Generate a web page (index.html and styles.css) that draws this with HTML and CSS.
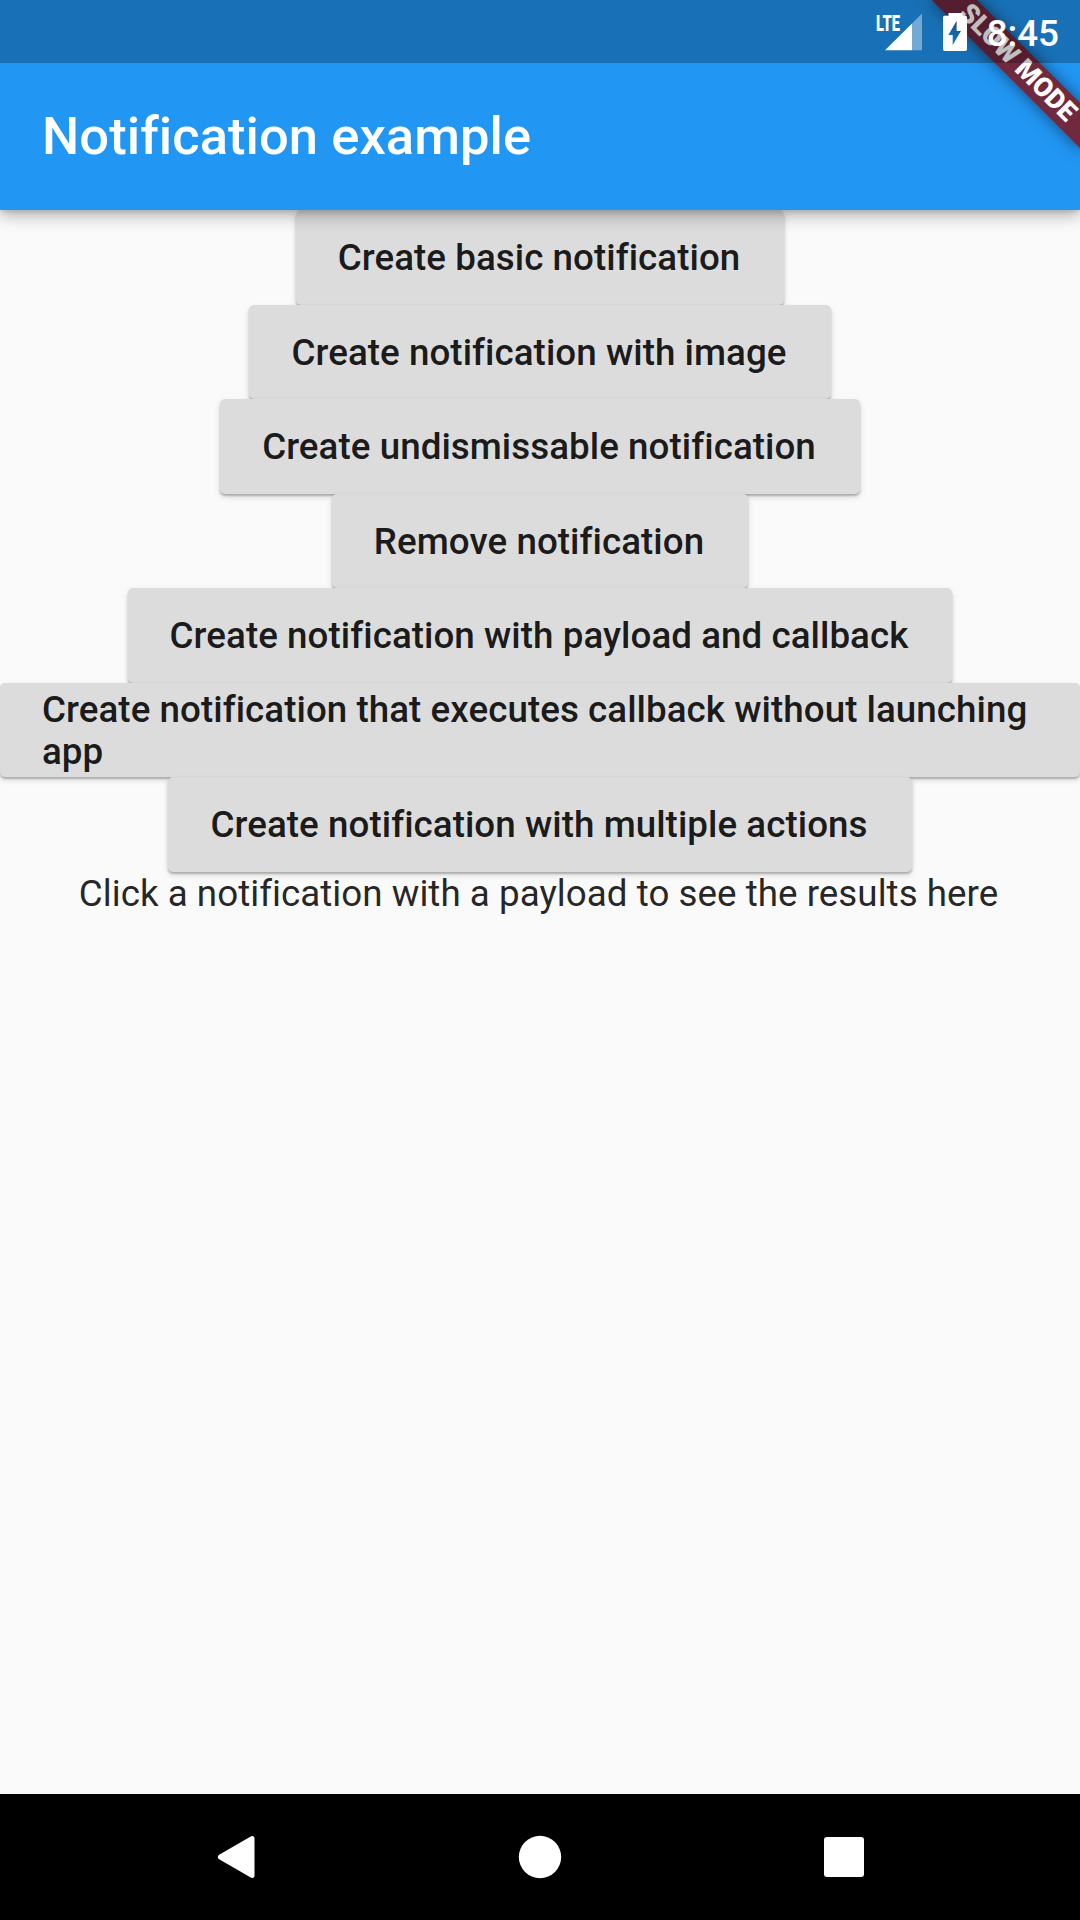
FILE: index.html
```html
<!DOCTYPE html>
<html lang="en">
<head>
<meta charset="utf-8">
<title>Notification example</title>
<link rel="stylesheet" href="styles.css">
</head>
<body>
<div class="screen">
  <header class="app-bar">
    <h1 class="title">Notification example</h1>
  </header>
  <main class="content">
    <button class="btn">Create basic notification</button>
    <button class="btn">Create notification with image</button>
    <button class="btn">Create undismissable notification</button>
    <button class="btn">Remove notification</button>
    <button class="btn">Create notification with payload and callback</button>
    <button class="btn">Create notification that executes callback without launching app</button>
    <button class="btn">Create notification with multiple actions</button>
    <p class="result">Click a notification with a payload to see the results here</p>
  </main>
  <nav class="nav-bar">
    <svg class="nav-icon back" viewBox="0 0 44 44"><path d="M6.4 22 L38 3.6 V40.4Z"/></svg>
    <svg class="nav-icon" viewBox="0 0 44 44"><circle cx="22" cy="22" r="21.2"/></svg>
    <svg class="nav-icon" viewBox="0 0 44 44"><rect x="2" y="2" width="40" height="40" rx="3"/></svg>
  </nav>
  <div class="banner">SLOW MODE</div>
  <div class="status-bar">
    <svg class="signal" viewBox="0 0 48 38">
      <path d="M11 37.3 L38 10.5 V37.3Z"/>
      <path class="faint" d="M38 10.5 L48 .6 V37.3 H38Z"/>
      <text class="lte" x="2" y="17.5" textLength="24" lengthAdjust="spacingAndGlyphs">LTE</text>
    </svg>
    <svg class="battery" viewBox="0 0 24 38">
      <path fill-rule="evenodd" d="M5.5 0 H19.5 V2.7 H22.5 Q24 2.7 24 4.5 V36.2 Q24 38 22.2 38 H1.8 Q0 38 0 36.2 V4.5 Q0 2.7 1.5 2.7 H5.5Z M13.6 8 L5.3 22 H9.7 V32 L17.9 18 H13.6Z"/>
    </svg>
    <span class="clock">8:45</span>
  </div>
</div>
</body>
</html>
```
FILE: styles.css
```css
* { box-sizing: border-box; }
body {
  margin: 0;
  font-family: Roboto, sans-serif;
  font-variant-ligatures: none;
}

.screen {
  position: relative;
  display: flex;
  flex-direction: column;
  width: 1080px;
  height: 1920px;
  overflow: hidden;
  background: #fafafa;
}

.app-bar {
  position: relative;
  z-index: 2;
  display: flex;
  align-items: center;
  height: 210px;
  padding: 63px 42px 0;
  background: #2196f3;
  box-shadow: 0 5px 16px rgba(0, 0, 0, .3), 0 2px 5px rgba(0, 0, 0, .12);
}
.title {
  margin: 0;
  color: #fff;
  font-size: 52.5px;
  font-weight: 500;
  line-height: 61px;
  letter-spacing: .06px;
}

.content {
  position: relative;
  z-index: 1;
  flex: 1;
  display: flex;
  flex-direction: column;
  align-items: center;
}
.btn {
  position: relative;
  height: 94.5px;
  max-width: 100%;
  padding: 2px 44px 0 42px;
  border: 0;
  border-radius: 5px;
  background: #dcdcdc;
  box-shadow: 0 2px 2px rgba(0, 0, 0, .22), 0 3px 6px rgba(0, 0, 0, .14);
  color: rgba(0, 0, 0, .89);
  font: 500 36.75px/42px Roboto, sans-serif;
  font-variant-ligatures: none;
  letter-spacing: .05px;
  text-align: left;
}
.result {
  position: relative;
  margin: 0;
  padding-right: 3px;
  color: rgba(0, 0, 0, .87);
  font-size: 36.75px;
  letter-spacing: .03px;
}

.nav-bar {
  position: relative;
  z-index: 2;
  display: flex;
  align-items: center;
  justify-content: center;
  gap: 260px;
  height: 126px;
  background: #000;
}
.nav-icon { width: 44px; height: 44px; fill: #fff; }
.back { stroke: #fff; stroke-width: 5; stroke-linejoin: round; }

/* diagonal ribbon across the top-right corner */
.banner {
  position: absolute;
  z-index: 3;
  top: 72.5px;
  left: 975px;
  width: 210px;
  height: 31.5px;
  background: rgba(127, 22, 32, .85);
  box-shadow: 0 0 16px rgba(0, 0, 0, .5);
  color: #fff;
  font-size: 26.775px;
  font-weight: 900;
  line-height: 31.5px;
  text-align: center;
  white-space: nowrap;
  transform: rotate(45deg);
  transform-origin: 105px -72.5px;
}

.status-bar {
  position: absolute;
  z-index: 4;
  top: 0;
  left: 0;
  right: 0;
  display: flex;
  align-items: center;
  justify-content: flex-end;
  height: 63px;
  padding-right: 21px;
  background: rgba(0, 0, 0, .25);
  color: #fff;
}
.signal { width: 48px; height: 38px; fill: #fff; margin-right: 21px; overflow: visible; }
.faint { opacity: .4; }
.lte { font: 900 22.5px Roboto, sans-serif; }
.battery { width: 24px; height: 38px; fill: #fff; margin-right: 20px; }
.clock { font-size: 36.75px; font-weight: 500; line-height: 60px; padding-top: 4px; }
```
